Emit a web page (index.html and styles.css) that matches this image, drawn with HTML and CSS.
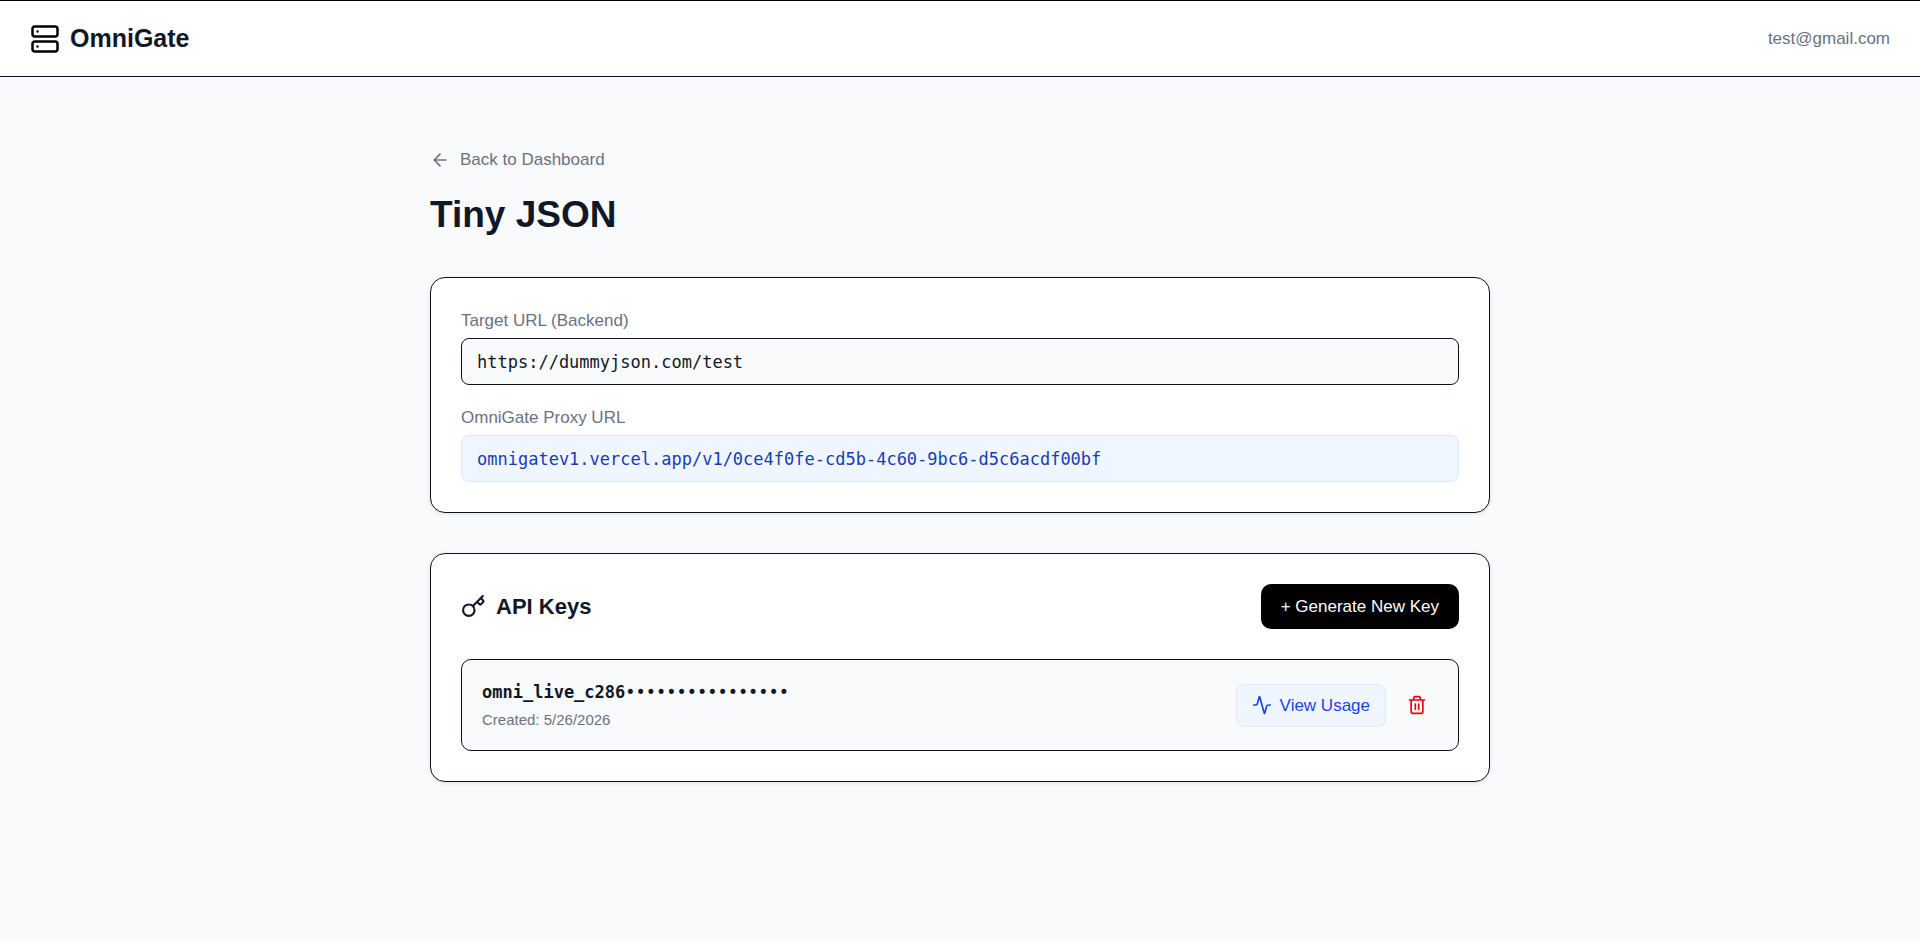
FILE: index.html
```html
<!DOCTYPE html>
<html lang="en">

<head>
    <meta charset="UTF-8">
    <meta name="viewport" content="width=device-width, initial-scale=1.0">
    <title>OmniGate</title>
    <link rel="stylesheet" href="styles.css">
</head>

<body>
    <header class="navbar">
        <a href="#" class="brand">
            <svg class="icon icon-lg" viewBox="0 0 24 24">
                <rect x="2" y="2" width="20" height="8" rx="2" />
                <rect x="2" y="14" width="20" height="8" rx="2" />
                <path d="M6 6h.01M6 18h.01" />
            </svg>
            <span>OmniGate</span>
        </a>
        <span class="user-email">test@gmail.com</span>
    </header>

    <main class="container">
        <a href="#" class="back-link">
            <svg class="icon icon-sm" viewBox="0 0 24 24">
                <path d="m12 19-7-7 7-7M19 12H5" />
            </svg>
            Back to Dashboard
        </a>
        <h1>Tiny JSON</h1>

        <!-- Endpoint URLs -->
        <section class="card urls">
            <div class="field">
                <label for="target">Target URL (Backend)</label>
                <input type="text" id="target" class="url" value="https://dummyjson.com/test" readonly>
            </div>
            <div class="field">
                <label for="proxy">OmniGate Proxy URL</label>
                <input type="text" id="proxy" class="url url-proxy" value="omnigatev1.vercel.app/v1/0ce4f0fe-cd5b-4c60-9bc6-d5c6acdf00bf" readonly>
            </div>
        </section>

        <!-- API keys -->
        <section class="card">
            <div class="card-header">
                <h2>
                    <svg class="icon icon-md" viewBox="0 0 24 24">
                        <path d="m15.5 7.5 2.3 2.3a1 1 0 0 0 1.4 0l2.1-2.1a1 1 0 0 0 0-1.4L19 4M21 2l-9.6 9.6" />
                        <circle cx="7.5" cy="15.5" r="5.5" />
                    </svg>
                    API Keys
                </h2>
                <button type="button" class="btn-generate">+ Generate New Key</button>
            </div>

            <div class="key-row">
                <div class="key-info">
                    <p class="key-value">omni_live_c286<span class="key-mask">••••••••••••••••</span></p>
                    <p class="key-date">Created: 5/26/2026</p>
                </div>
                <div class="key-actions">
                    <a href="#" class="btn-usage">
                        <svg class="icon icon-sm" viewBox="0 0 24 24">
                            <path d="M22 12h-2.48a2 2 0 0 0-1.93 1.46l-2.35 8.36a.25.25 0 0 1-.48 0L9.24 2.18a.25.25 0 0 0-.48 0l-2.35 8.36A2 2 0 0 1 4.49 12H2" />
                        </svg>
                        View Usage
                    </a>
                    <button type="button" class="btn-delete" aria-label="Delete key">
                        <svg class="icon icon-sm" viewBox="0 0 24 24">
                            <path d="M3 6h18M19 6v14a2 2 0 0 1-2 2H7a2 2 0 0 1-2-2V6M8 6V4a2 2 0 0 1 2-2h4a2 2 0 0 1 2 2v2M10 11v6M14 11v6" />
                        </svg>
                    </button>
                </div>
            </div>
        </section>
    </main>
</body>

</html>
```

FILE: styles.css
```css
* {
    box-sizing: border-box;
}

body {
    margin: 0;
    background-color: #f9fafb;
    color: #101828;
    font-family: "Liberation Sans", Arial, sans-serif;
    font-size: 17px;
    line-height: 25px;
}

h1,
h2,
p {
    margin: 0;
}

a {
    color: inherit;
    text-decoration: none;
}

button,
input {
    font: inherit;
    color: inherit;
}

button {
    cursor: pointer;
}

.icon {
    flex-shrink: 0;
    fill: none;
    stroke: currentColor;
    stroke-width: 2;
    stroke-linecap: round;
    stroke-linejoin: round;
}

.icon-sm {
    width: 20px;
    height: 20px;
}

.icon-md {
    width: 25px;
    height: 25px;
}

.icon-lg {
    width: 30px;
    height: 30px;
    color: #000;
}

.navbar {
    display: flex;
    justify-content: space-between;
    align-items: center;
    padding: 20px 30px;
    background-color: #fff;
    border-top: 1px solid #000;
    border-bottom: 1px solid #0b1222;
}

.brand {
    display: flex;
    align-items: center;
    gap: 10px;
    font-size: 25px;
    font-weight: bold;
    line-height: 35px;
}

.user-email {
    color: #6a7282;
}

.container {
    max-width: 1120px;
    margin: 0 auto;
    padding: 70px 30px;
}

.back-link {
    display: flex;
    align-items: center;
    gap: 10px;
    width: fit-content;
    margin-bottom: 20px;
    color: #6a7282;
}

h1 {
    margin-bottom: 40px;
    font-size: 37px;
    line-height: 45px;
}

h2 {
    display: flex;
    align-items: center;
    gap: 10px;
    font-size: 22px;
    line-height: 35px;
}

.card {
    margin-bottom: 40px;
    padding: 30px;
    background-color: #fff;
    border: 1px solid #0b1222;
    border-radius: 15px;
    box-shadow: 0 1px 4px rgba(0, 0, 0, 0.1);
}

.urls {
    display: flex;
    flex-direction: column;
    gap: 20px;
}

.field {
    display: flex;
    flex-direction: column;
    gap: 5px;
}

.field label {
    color: #6a7282;
}

.url {
    width: 100%;
    height: 47px;
    padding: 10px 15px;
    background-color: #f9fafb;
    border: 1px solid #0b1222;
    border-radius: 8px;
    font-family: "DejaVu Sans Mono", monospace;
}

.url-proxy {
    background-color: #eff6ff;
    border-color: #dbeafe;
    color: #193cb8;
}

.card-header {
    display: flex;
    justify-content: space-between;
    align-items: center;
    margin-bottom: 30px;
}

.btn-generate {
    padding: 10px 20px;
    background-color: #000;
    border: none;
    border-radius: 10px;
    color: #fff;
}

.key-row {
    display: flex;
    justify-content: space-between;
    align-items: center;
    padding: 20px;
    background-color: #f9fafb;
    border: 1px solid #0b1222;
    border-radius: 10px;
}

.key-value {
    margin-bottom: 5px;
    font-family: "DejaVu Sans Mono", monospace;
    font-weight: bold;
}

.key-mask {
    font-weight: normal;
}

.key-date {
    color: #6a7282;
    font-size: 15px;
    line-height: 20px;
}

.key-actions {
    display: flex;
    align-items: center;
    gap: 10px;
}

.btn-usage {
    display: flex;
    align-items: center;
    gap: 8px;
    padding: 8px 15px;
    background-color: #eff6ff;
    border: 1px solid #dbeafe;
    border-radius: 8px;
    color: #1447e6;
}

.btn-delete {
    display: flex;
    padding: 10px;
    background: none;
    border: 1px solid transparent;
    color: #e7000b;
}
```
